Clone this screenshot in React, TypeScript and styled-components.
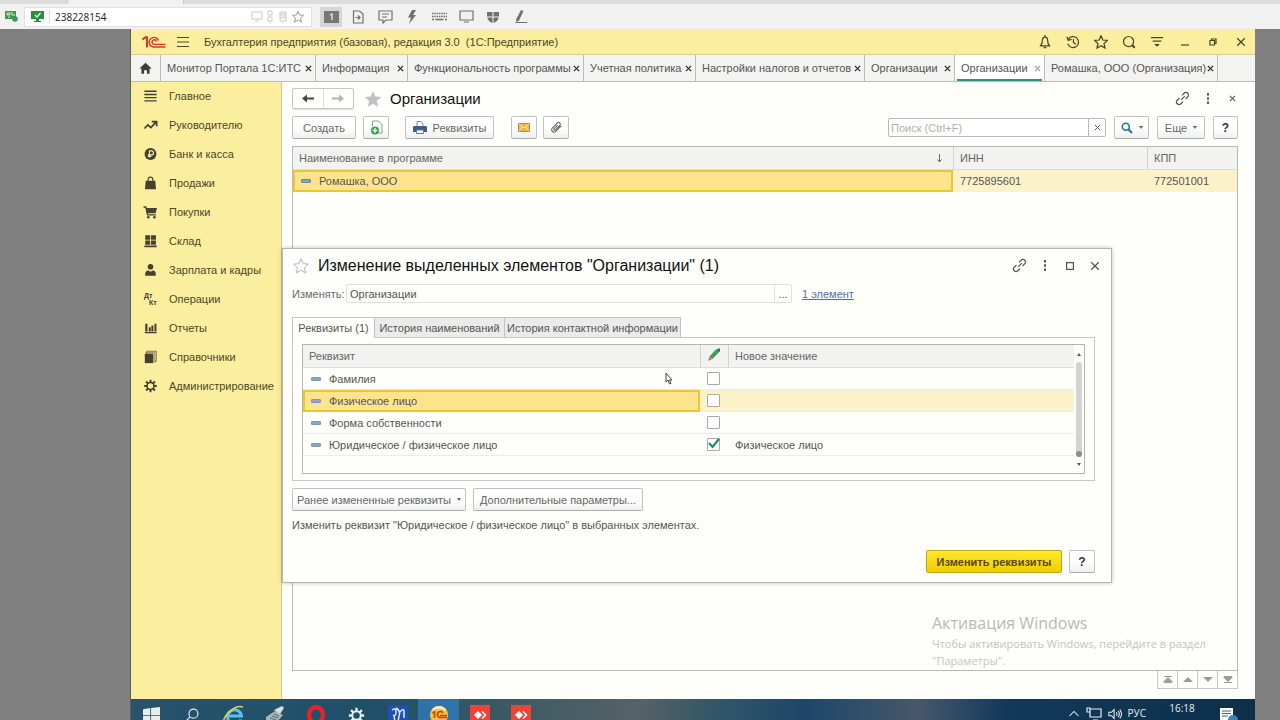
import React from "react";
import styled, { createGlobalStyle, css } from "styled-components";

const ui = '"Liberation Sans", Arial, sans-serif';
const humanist = '"Open Sans", "Noto Sans", sans-serif';
const paper = "#fefffb";
const yellow = "#fcee9f";
const ink = "#555";

const GlobalStyle = createGlobalStyle`
  * { box-sizing: border-box; }
  body { margin: 0; font: 11px/14px ${ui}; color: ${ink}; background: #808080; }
  button, input { font: inherit; color: inherit; }
  button { cursor: pointer; }
`;

/* ---------- Remote viewer chrome ---------- */

const Page = styled.div`
  display: flex;
  flex-direction: column;
  min-height: 100vh;
  overflow: hidden;
  white-space: nowrap;
`;

const ViewerTabs = styled.div`
  display: flex;
  height: 4px;
  background: #dcdcdc;
`;

const ViewerTab = styled.div`
  width: 117px;
  margin-left: 67px;
  background: #f1f1f1;
  border: solid #c8c8c8;
  border-width: 0 1px;
`;

const ViewerBar = styled.header`
  display: flex;
  align-items: center;
  gap: 6px;
  height: 25px;
  padding: 0 5px;
  background: #f1f1f1;
`;

const AddressBox = styled.div`
  display: flex;
  align-items: center;
  width: 288px;
  height: 20px;
  padding: 0 6px;
  gap: 5px;
  background: #fff;
  border: 1px solid #e2e2e2;
`;

const AddressInput = styled.input`
  flex: 1;
  min-width: 0;
  border: 0;
  border-left: 1px solid #ddd;
  padding: 0 0 0 5px;
  outline: 0;
  background: none;
  color: #1c1c1c;
  font: 10px/14px ${humanist};
`;

const ViewerTools = styled.div`
  display: flex;
  align-items: center;
  gap: 5px;
  padding-left: 2px;
`;

const ViewerTool = styled.button<{ $active?: boolean }>`
  display: grid;
  place-items: center;
  width: 22px;
  height: 20px;
  padding: 0;
  border: 0;
  color: #707070;
  background: ${(p) => (p.$active ? "#d6d6d6" : "none")};
`;

const Desktop = styled.main`
  flex: 1;
  display: flex;
  flex-direction: column;
  position: relative;
  margin: 0 25px 0 130px;
  border-left: 1px solid #5c5c5c;
  background: ${paper};
`;

/* ---------- Application window ---------- */

const TitleBar = styled.div`
  display: flex;
  align-items: center;
  height: 26px;
  padding-left: 10px;
  background: ${yellow};
  border-bottom: 1px solid #d9cf95;
  color: #4d4628;
`;

const PlainButton = styled.button`
  display: grid;
  place-items: center;
  padding: 0;
  border: 0;
  background: none;
  color: inherit;
`;

const AppTitle = styled.h1`
  flex: 1;
  margin: 0 0 0 5px;
  font-size: 11px;
  font-weight: 400;
`;

const TitleTools = styled.div`
  display: grid;
  grid-auto-flow: column;
  grid-auto-columns: 28px;
  justify-items: center;
  color: #4a4427;
`;

const TabStrip = styled.nav`
  display: flex;
  height: 27px;
  background: #f3f3f1;
  border-bottom: 1px solid #bdbdb8;
`;

const HomeTab = styled.button`
  display: grid;
  place-items: center;
  width: 30px;
  padding: 0;
  border: 0;
  border-right: 1px solid #bdbdb8;
  background: none;
  color: #3c3c3c;
`;

const Tab = styled.div<{ $width: number; $active?: boolean }>`
  display: flex;
  align-items: center;
  justify-content: space-between;
  flex: none;
  width: ${(p) => p.$width}px;
  padding: 0 3px 0 6px;
  border-right: 1px solid #bdbdb8;
  ${(p) =>
    p.$active &&
    css`
      background: linear-gradient(#2d9474, #2d9474) 2px 100% / calc(100% - 4px) 2px no-repeat #fff;
    `}
`;

const TabName = styled.button`
  padding: 0;
  border: 0;
  background: none;
`;

const TabClose = styled(PlainButton)<{ $muted?: boolean }>`
  color: ${(p) => (p.$muted ? "#a5a5a5" : "#333")};
`;

const Body = styled.div`
  flex: 1;
  display: flex;
`;

const Sidebar = styled.nav`
  flex: 0 0 151px;
  background: ${yellow};
  border-right: 1px solid #d5c98a;
`;

const SideList = styled.div`
  margin-top: -1px;
`;

const SideLink = styled.a`
  display: flex;
  align-items: center;
  gap: 10px;
  height: 29px;
  padding-left: 11px;
  color: #4d4628;
  text-decoration: none;
  svg { width: 17px; flex: none; color: #45412f; }
`;

const Workspace = styled.section`
  position: relative;
  flex: 1;
  min-width: 0;
  display: flex;
  flex-direction: column;
  padding: 6px 17px 10px 10px;
`;

const HeadRow = styled.div`
  display: flex;
  align-items: center;
  height: 21px;
`;

const NavPair = styled.div`
  display: flex;
  width: 62px;
  height: 21px;
  border: 1px solid #c6c6c2;
  border-radius: 2px;
  box-shadow: 0 1px 1px #ddd;
  margin-right: 10px;
`;

const NavButton = styled(PlainButton)`
  flex: 1;
  & + & { border-left: 1px solid #ddd; }
`;

const Heading = styled.h2<{ $size: number }>`
  flex: 1;
  margin: 0 0 0 8px;
  font-size: ${(p) => p.$size}px;
  line-height: 20px;
  font-weight: 400;
  color: #111;
`;

const HeadTools = styled.div<{ $outset: number }>`
  display: grid;
  grid-auto-flow: column;
  grid-auto-columns: 25px;
  justify-items: center;
  align-items: center;
  margin-right: -${(p) => p.$outset}px;
`;

const Toolbar = styled.div`
  display: flex;
  align-items: center;
  margin: 7px 0;
`;

const Push = styled.div`
  flex: 1;
`;

const Button = styled.button<{ $width: number; $gap?: number; $primary?: boolean }>`
  display: flex;
  align-items: center;
  justify-content: center;
  gap: 6px;
  flex: none;
  width: ${(p) => p.$width}px;
  height: 23px;
  padding: 0;
  margin-right: ${(p) => p.$gap ?? 0}px;
  border: 1px solid #c2c2be;
  border-bottom-color: #acaca8;
  border-radius: 2px;
  background: linear-gradient(#fff 50%, #efefed);
  color: #666;
  ${(p) =>
    p.$primary &&
    css`
      border-color: #c0a51a;
      background: linear-gradient(#ffe82b, #f1cd00);
      color: #584800;
      font-weight: 700;
    `}
`;

const HelpMark = styled.span`
  font-size: 12px;
  font-weight: 700;
  color: #333;
`;

const SearchBox = styled.div`
  display: flex;
  width: 218px;
  height: 19px;
  margin-right: 8px;
  border: 1px solid #b9b9b5;
  border-radius: 2px;
  background: #fff;
  input {
    flex: 1;
    min-width: 0;
    padding: 0 2px;
    border: 0;
    outline: 0;
    background: none;
  }
  input::placeholder { color: #b0b0b0; opacity: 1; }
  button { width: 17px; border-left: 1px solid #b9b9b5; }
`;

const ListFrame = styled.div`
  flex: 1;
  border: 1px solid #b9b9b5;
`;

const Grid = styled.table`
  width: 100%;
  align-self: flex-start;
  table-layout: fixed;
  border-collapse: separate;
  border-spacing: 0;
  th, td {
    padding: 0 6px;
    height: 22px;
    text-align: left;
    font-weight: 400;
    color: ${ink};
  }
  td + td { padding-left: 7px; }
  th {
    height: 23px;
    background: #f2f2f0;
    border-bottom: 1px solid #dcdcd8;
    color: #666;
  }
  th + th { border-left: 1px solid #d2d2ce; }
`;

const Row = styled.tr<{ $selected?: boolean; $ruled?: boolean }>`
  td { ${(p) => p.$ruled && "border-bottom: 1px solid #ececea;"} }
  ${(p) =>
    p.$selected &&
    css`
      td { background: #fbf2c9; }
      td:first-child { background: #ffe48d; border: 2px solid #e9c72f; }
    `}
`;

const CellLine = styled.span<{ $indent?: number }>`
  display: flex;
  align-items: center;
  gap: 8px;
  padding-left: ${(p) => p.$indent ?? 0}px;
`;

const HeaderLine = styled.span`
  display: flex;
  justify-content: space-between;
  align-items: center;
  padding-right: 4px;
`;

const Dash = styled.i<{ $blue?: boolean }>`
  width: 10px;
  height: 4px;
  border-radius: 1px;
  border: 1px solid ${(p) => (p.$blue ? "#8397b4" : "#74858b")};
  background: ${(p) => (p.$blue ? "#8fa5c4" : "#7fa7b5")};
`;

const Pager = styled.div`
  display: flex;
  align-self: flex-end;
  border-right: 1px solid #c6c6c2;
  button {
    width: 20px;
    height: 18px;
    border: solid #c6c6c2;
    border-width: 0 0 1px 1px;
    color: #9c9c9c;
  }
`;

/* ---------- Dialog ---------- */

const Dialog = styled.section`
  position: absolute;
  top: 166px;
  left: 0;
  right: 143px;
  padding: 6px 16px 9px 9px;
  border: 1px solid #b5b5b0;
  background: ${paper};
  box-shadow: 0 0 4px rgba(0, 0, 0, 0.25);
`;

const FieldRow = styled.div`
  display: flex;
  align-items: center;
  margin: 8px 0 14px;
  > label { width: 54px; color: #6a6a6a; }
  a { margin-left: 10px; color: #4d73a0; }
`;

const Field = styled.div`
  display: flex;
  width: 446px;
  height: 19px;
  border: 1px solid #e0e0dc;
  border-radius: 2px;
  input { flex: 1; min-width: 0; border: 0; padding: 0 3px; outline: 0; background: none; }
  button { width: 17px; border-left: 1px solid #e0e0dc; }
`;

const DialogTabs = styled.div`
  display: flex;
  height: 20px;
`;

const DialogTab = styled.button<{ $width: number; $active?: boolean }>`
  width: ${(p) => p.$width}px;
  padding: 0;
  border: 1px solid #c2c2be;
  border-bottom: 0;
  background: ${(p) => (p.$active ? paper : "#ebebe9")};
  margin-bottom: ${(p) => (p.$active ? -1 : 0)}px;
  & + & { border-left: 0; }
`;

const Panel = styled.div`
  padding: 6px 9px;
  border: 1px solid #c9c9c5;
`;

const TableFrame = styled.div`
  display: flex;
  height: 130px;
  border: 1px solid #b5b5b0;
`;

const ScrollBar = styled.div`
  flex: 0 0 10px;
  display: flex;
  flex-direction: column;
  align-items: center;
  padding: 8px 0 7px;
  gap: 6px;
`;

const ScrollThumb = styled.div`
  flex: 1;
  display: flex;
  align-items: flex-end;
  width: 6px;
  border-radius: 3px;
  background: #d3d3d1;
  &::after {
    content: "";
    width: 6px;
    height: 6px;
    border-radius: 50%;
    background: #8f8f8d;
  }
`;

const CheckBox = styled.label`
  display: grid;
  width: 13px;
  input, svg { grid-area: 1 / 1; }
  input {
    appearance: none;
    width: 13px;
    height: 13px;
    margin: 0;
    border: 1px solid #a9a9a5;
    border-radius: 1px;
    background: #fff;
  }
  svg { display: none; pointer-events: none; z-index: 1; }
  input:checked + svg { display: block; }
`;

const DialogActions = styled.div<{ $end?: boolean }>`
  display: flex;
  justify-content: ${(p) => (p.$end ? "flex-end" : "flex-start")};
  margin-top: 7px;
`;

const Hint = styled.p`
  margin: 7px 0 18px;
`;

const Pointer = styled.svg`
  position: absolute;
  left: 382px;
  top: 123px;
`;

const Watermark = styled.aside`
  position: absolute;
  right: 33px;
  bottom: 51px;
  width: 290px;
  font: 11px/17px ${humanist};
  color: #c3c3c1;
  pointer-events: none;
  p { margin: 0; }
  p:first-child { font-size: 16px; line-height: 23px; color: #b9b9b7; }
`;

/* ---------- Taskbar ---------- */

const Taskbar = styled.footer`
  display: flex;
  align-items: flex-start;
  height: 21px;
  overflow: hidden;
  background: linear-gradient(90deg, #27536b, #1f5069 22%, #3d5a64 34%, #566266 45%, #335668 52%, #1c4668 60%, #47586a 70%, #12385a 78%, #0d3049);
  color: #e8edf0;
`;

const TaskButton = styled(PlainButton)<{ $active?: boolean }>`
  flex: none;
  width: 41px;
  height: 32px;
  background: ${(p) => (p.$active ? "#2f74a8" : "none")};
`;

const Tray = styled.div`
  display: flex;
  align-items: flex-start;
  gap: 6px;
  margin-left: auto;
  padding: 8px 17px 0 0;
  font: 10px/12px ${humanist};
`;

const Clock = styled.time`
  display: block;
  width: 60px;
  margin-top: -5px;
  text-align: center;
`;

/* ---------- Icons ---------- */

type IconProps = { w?: number; h?: number; box?: string; children: React.ReactNode; sw?: number };

const Line = ({ w = 14, h = w, box = "0 0 16 16", sw = 1.4, children }: IconProps) => (
  <svg width={w} height={h} viewBox={box} fill="none" stroke="currentColor" strokeWidth={sw} aria-hidden>
    {children}
  </svg>
);

const Solid = ({ w = 14, h = w, box = "0 0 16 16", children }: IconProps) => (
  <svg width={w} height={h} viewBox={box} fill="currentColor" aria-hidden>
    {children}
  </svg>
);

const Cross = ({ size = 7, sw = 1.6 }: { size?: number; sw?: number }) => (
  <Line w={size} box="0 0 8 8" sw={sw}><path d="M1 1l6 6M7 1L1 7" /></Line>
);

const starPath = "M8 .8l2.100 4.900 5.300.5-4 3.500 1.200 5.200L8 12.200l-4.600 2.700 1.200-5.200-4-3.500 5.300-.5z";

const LinkIcon = () => (
  <Line w={15} sw={1.3}>
    <path d="M6.500 9.500l4-4M7.500 4.600l2.200-2.200a2.600 2.600 0 0 1 3.900 3.800l-2.400 2.300M8.500 11.400l-2.200 2.200a2.600 2.600 0 0 1-3.900-3.800l2.400-2.300" />
  </Line>
);

const DotsIcon = () => (
  <Solid w={4} h={11} box="0 0 4 11"><path d="M1 0h2v2.500H1zM1 4.200h2v2.500H1zM1 8.500h2V11H1z" /></Solid>
);

const Caret = ({ up }: { up?: boolean }) => (
  <Solid w={4} h={3} box="0 0 4 3"><path d={up ? "M0 3h4L2 0z" : "M0 0h4L2 3z"} /></Solid>
);

const Arrow = ({ back, color }: { back?: boolean; color: string }) => (
  <svg width="12" height="9" viewBox="0 0 12 9" fill={color} aria-hidden>
    <path d={back ? "M0 4.500L5 .5v2.900h7v2.200H5v2.900z" : "M12 4.500L7 .5v2.900H0v2.200h7v2.900z"} />
  </svg>
);

const Logo1C = () => (
  <svg width="26" height="14" viewBox="0 0 26 14" fill="none" stroke="#d8322a" role="img" aria-label="1C">
    <path d="M1.500 4.600L4.500 2.300H6V12.500" strokeWidth="2" />
    <path d="M17.500 5.500A4.800 4.800 0 1 0 13.500 12H24.500" strokeWidth="1.500" />
    <path d="M15.500 6.500A2.300 2.300 0 1 0 13.500 9.400H24.500" strokeWidth="1.300" />
  </svg>
);

const Gear = ({ size = 14 }: { size?: number }) => (
  <Line w={size} sw={1.8}>
    <circle cx="8" cy="8" r="4" />
    <path d="M8 4V.8M8 15.200V12M4 8H.8M15.200 8H12M5.200 5.200L2.900 2.900M13.100 13.100l-2.300-2.300M5.200 10.800l-2.300 2.300M13.100 2.900l-2.300 2.300" strokeWidth="2.200" />
  </Line>
);

const viewerTools: { name: string; icon: React.ReactNode }[] = [
  { name: "Монитор 1", icon: (
    <svg width="15" height="12" viewBox="0 0 15 12" aria-hidden><path fill="#777" d="M0 0h15v12H0z" /><path fill="none" stroke="#eee" strokeWidth="1.300" d="M6 4l2-1v6" /></svg>
  ) },
  { name: "Передача файлов", icon: <Line w={13} h={14} box="0 0 13 14" sw={1.2}><path d="M1.500 1h6l3.500 3v9H1.500zM3.500 7.500H8M6 5.500l2 2-2 2" /></Line> },
  { name: "Чат", icon: <Line w={15} h={14} box="0 0 15 14" sw={1.2}><path d="M1 1h13v9H8l-3 3v-3H1zM4 4h7M4 7h5" /></Line> },
  { name: "Действия", icon: <Solid w={10} h={14} box="0 0 10 14"><path d="M5 0h4L6 5h3L2 14l2-6.500H1z" /></Solid> },
  { name: "Клавиатура", icon: <Line w={15} h={9} box="0 0 15 9" sw={1.5}><path d="M0 1.500h15M0 4.500h15" strokeDasharray="1.500 .8" /><path d="M0 7.500h2M3.500 7.500h8M13 7.500h2" /></Line> },
  { name: "Экран", icon: <Line w={15} h={13} box="0 0 15 13" sw={1.2}><path d="M1 1h13v9H1zM5 12h5" /></Line> },
  { name: "Права", icon: <Solid w={12} h={12} box="0 0 12 12"><path d="M0 1h5.500v4.500H0zM6.500 1H12v4.500H6.500zM.3 6.500h5.200V12C2.500 11 .8 9 .3 6.500zM6.500 6.500h5.200C11.200 9 9.500 11 6.500 12z" /></Solid> },
  { name: "Рисование", icon: <Solid w={13} h={13} box="0 0 13 13"><path d="M7 0l2.500 1L5 10.500 2 12l.3-3zM2 12h11v1H1z" /></Solid> },
];

const tabs = [
  { name: "Монитор Портала 1С:ИТС", width: 155 },
  { name: "Информация", width: 92 },
  { name: "Функциональность программы", width: 176 },
  { name: "Учетная политика", width: 112 },
  { name: "Настройки налогов и отчетов", width: 169 },
  { name: "Организации", width: 90 },
  { name: "Организации", width: 90, active: true },
  { name: "Ромашка, ООО (Организация)", width: 173 },
];

const sections: { name: string; icon: React.ReactNode }[] = [
  { name: "Главное", icon: <Line h={14} sw={1.6}><path d="M1 2.500h14M1 6.200h14M1 9.900h14M1 13.600h14" /></Line> },
  { name: "Руководителю", icon: <Line h={14} sw={2}><path d="M1 12l4-4 3.500 3L14 5M9.500 4H15v5.500" /></Line> },
  { name: "Банк и касса", icon: <Solid h={14}><circle cx="8" cy="8" r="6.800" /><path d="M6.800 12V4.500h2.400a2.200 2.200 0 0 1 0 4.500H5M5 10.700h4" fill="none" stroke={yellow} strokeWidth="1.300" /></Solid> },
  { name: "Продажи", icon: <Solid h={14}><path d="M2.500 5.500h11l.8 9.500H1.700z" /><path d="M5.300 7V4a2.700 2.700 0 0 1 5.400 0v3" fill="none" stroke="currentColor" strokeWidth="1.300" /></Solid> },
  { name: "Покупки", icon: <Solid h={14}><path d="M0 1.500h3l.7 2H15.500l-1.800 6H5l.3 1.200h8.900V12H4L2 3H0z" /><circle cx="5.500" cy="14" r="1.500" /><circle cx="12.500" cy="14" r="1.500" /></Solid> },
  { name: "Склад", icon: <Solid h={14}><path d="M2 1.500h5.600v5H2zM8.600 1.500h5.600v5H8.600zM2 7.500h5.600v4.700H2zM8.600 7.500h5.600v4.700H8.600zM1 13.200h14.200V15H1z" /></Solid> },
  { name: "Зарплата и кадры", icon: <Solid h={14}><circle cx="8" cy="4.300" r="3.200" /><path d="M2 14.500v-2.500q0-3 3.500-3.500L8 10l2.500-1.500Q14 9 14 12v2.500z" /></Solid> },
  { name: "Операции", icon: (
    <svg width="17" height="16" viewBox="0 0 17 16" fill="currentColor" fontFamily="Liberation Sans" fontWeight="700" fontSize="7" aria-hidden><text x="2" y="7">Дт</text><text x="7" y="14">Кт</text></svg>
  ) },
  { name: "Отчеты", icon: <Solid h={14}><path d="M2 3h2.500v9H2zM6 7h2.300v5H6zM9 5h2.300v7H9zM12.500 3h2.300v9h-2.300zM1.500 12.500H15V14H1.500z" /></Solid> },
  { name: "Справочники", icon: <Solid h={14}><path d="M1.500 4h9.800v11H1.500z" /><path d="M3 3.500L4 1.500h10.500v11l-2 1.500" fill="none" stroke="currentColor" strokeWidth="1.200" opacity=".7" /><path d="M3.500 2.800h9.300v10" fill="none" stroke="currentColor" opacity=".6" /></Solid> },
  { name: "Администрирование", icon: <Gear /> },
];

const attributes = [
  { name: "Фамилия", checked: false, value: "" },
  { name: "Физическое лицо", checked: false, value: "", selected: true },
  { name: "Форма собственности", checked: false, value: "" },
  { name: "Юридическое / физическое лицо", checked: true, value: "Физическое лицо" },
];

const AnyDesk = () => (
  <svg width="20" height="20" viewBox="0 0 20 20" aria-hidden><path fill="#ee4438" d="M0 0h20v20H0z" /><path fill="#fff" d="M4 10l4-4 4 4-4 4z" /><path fill="none" stroke="#fff" strokeWidth="1.500" d="M12 6.500l3.500 3.500-3.500 3.500" /></svg>
);

const tasks: { name: string; icon: React.ReactNode; active?: boolean }[] = [
  { name: "Пуск", icon: <Solid w={17} h={17}><path d="M0 2l6.800-1v6.500H0zM7.600.9L16 0v7.500H7.600zM0 8.300h6.800V15L0 14zM7.600 8.300H16V16l-8.400-1z" /></Solid> },
  { name: "Поиск", icon: <Line w={15} sw={1.2}><circle cx="9" cy="6" r="4.800" /><path d="M5.500 9.500L1 14" /></Line> },
  { name: "Браузер", icon: (
    <svg width="22" height="20" viewBox="0 0 22 20" fill="none" aria-hidden><path d="M18 14.500A7 7 0 1 1 18.500 11H5.500" stroke="#55c3ee" strokeWidth="3" /><path d="M1 18C-1 12 12-1 20 2" stroke="#f1cf45" strokeWidth="1.500" /></svg>
  ) },
  { name: "Утилита", icon: (
    <svg width="20" height="20" viewBox="0 0 20 20" aria-hidden><path fill="#a9b4b9" d="M1 12l9-6 8 4-7 8-10-2z" /><path fill="#d7dde0" d="M9 5l8-4 2 2-4 6z" /><path stroke="#5d6a71" d="M5 13l6 2M7 11l6 2M9 9l5 2" /></svg>
  ) },
  { name: "Opera", icon: (
    <svg width="20" height="20" viewBox="0 0 20 20" aria-hidden><ellipse cx="10" cy="10" rx="7" ry="8" fill="none" stroke="#e4222c" strokeWidth="4.500" /></svg>
  ) },
  { name: "Параметры", icon: <Gear size={17} /> },
  { name: "Конфигуратор", icon: (
    <svg width="20" height="20" viewBox="0 0 20 20" aria-hidden><path fill="#1d4fb4" d="M0 0h20v20H0z" /><path fill="none" stroke="#e3ebf8" strokeWidth="1.500" d="M4 5q4-3 4 2t-3 3M8 3q5 3 3 8M12 7q4-5 4 0v6M6 10l1 8M11 11l-1 6" /></svg>
  ) },
  { name: "1С:Предприятие", active: true, icon: (
    <svg width="20" height="20" viewBox="0 0 20 20" aria-hidden><circle cx="10" cy="10" r="9" fill="#f7c33c" /><path fill="#f9e9b5" d="M2 6a9 9 0 0 1 16 0q-8-4-16 0z" /><path fill="none" stroke="#d5371f" strokeWidth="1.700" d="M3.500 8l2-1v6M14 8a3 3 0 1 0-2 4.500h6M11 10.500h7" /></svg>
  ) },
  { name: "AnyDesk", icon: <AnyDesk /> },
  { name: "AnyDesk 2", icon: <AnyDesk /> },
];

const pagerButtons = [
  { name: "В начало", d: "M1 0h8v1H1zM5 1l5 5H0zM1 6h8v1H1z" },
  { name: "Выше", d: "M5 1l5 5H0z" },
  { name: "Ниже", d: "M0 1h10L5 6z" },
  { name: "В конец", d: "M1 0h8v1H1zM0 1h10L5 6zM1 6h8v1H1z" },
];

/* ---------- Views ---------- */

const Viewer = () => (
  <>
    <ViewerTabs><ViewerTab /></ViewerTabs>
    <ViewerBar>
      <svg width="13" height="11" viewBox="0 0 13 11" aria-hidden><path fill="#3d9a4c" d="M0 0h11v8H0z" /><path stroke="#d9efdc" fill="none" d="M2 2h3v2H2zM7 1v3h3M3 7l2-2" /><circle cx="10" cy="8" r="2.800" fill="#4a8f55" /></svg>
      <AddressBox>
        <svg width="13" height="11" viewBox="0 0 13 11" aria-hidden><path fill="#24913c" d="M0 0h13v8H8v2h2v1H3v-1h2V8H0z" /><path fill="none" stroke="#fff" strokeWidth="1.200" d="M4 4l2 2 3.500-4" /></svg>
        <AddressInput aria-label="Адрес" defaultValue="238228154" />
        <svg width="54" height="14" viewBox="0 0 54 14" fill="none" stroke="#c9c9cc" aria-hidden>
          <path d="M1 2h10v7H1zM4 11h4M17 1h4v4h-4zM17 7h4v4h-4zM18.500 13h1" />
          <path d="M29 2h6v9h-6zM29 4h6M29 6h6M29 8h6M31.500 13h1" />
          <path stroke="#999" d="M47 1.500l1.500 3.500 4 .3-3 2.700 1 4-3.500-2.200-3.500 2.200 1-4-3-2.700 4-.3z" />
        </svg>
      </AddressBox>
      <ViewerTools>
        {viewerTools.map((t, i) => (
          <ViewerTool key={t.name} title={t.name} $active={i === 0}>{t.icon}</ViewerTool>
        ))}
      </ViewerTools>
    </ViewerBar>
  </>
);

const AppHeader = () => (
  <>
    <TitleBar>
      <Logo1C />
      <PlainButton aria-label="Меню">
        <Line w={32} h={12} box="-4 0 32 12" sw={1.2}><path d="M6 1.500h12M6 6h12M6 10.500h12" /></Line>
      </PlainButton>
      <AppTitle>Бухгалтерия предприятия (базовая), редакция 3.0&nbsp; (1С:Предприятие)</AppTitle>
      <TitleTools>
        <PlainButton aria-label="Уведомления"><Line><path d="M2 12.500h12M3 12q2-2 2-6a3 3.500 0 0 1 6 0q0 4 2 6M6.500 14.500h3M8 0v2" /></Line></PlainButton>
        <PlainButton aria-label="История"><Line><path d="M2.500 5a6.300 6.300 0 1 1-.5 5M1 2l1.500 4 4-1M8.500 4.500v4l2.500 2" /></Line></PlainButton>
        <PlainButton aria-label="Избранное"><Line><path d={starPath} /></Line></PlainButton>
        <PlainButton aria-label="Поиск"><Line><circle cx="7.500" cy="7.500" r="5.800" /><path d="M11.500 11.500l3 3" strokeWidth="2.400" /></Line></PlainButton>
        <PlainButton aria-label="Настройка панели"><Line><path d="M1 3h14M3 7h10M6.500 11l1.500 1.500L9.500 11z" /></Line></PlainButton>
        <PlainButton aria-label="Свернуть"><Line w={8} box="0 0 8 8" sw={1.2}><path d="M0 7h8" /></Line></PlainButton>
        <PlainButton aria-label="Восстановить"><Line w={8} box="0 0 8 8" sw={1.2}><path d="M1 2.500h4.500v4.500H1zM2.500 2V1H7v4.500H6" /></Line></PlainButton>
        <PlainButton aria-label="Закрыть"><Cross size={10} sw={1} /></PlainButton>
      </TitleTools>
    </TitleBar>
    <TabStrip>
      <HomeTab aria-label="Начальная страница"><Solid w={13}><path d="M8 1l7.500 7H13v6.500H9.800V10H6.200v4.500H3V8H.5z" /></Solid></HomeTab>
      {tabs.map((t, i) => (
        <Tab key={i} $width={t.width} $active={t.active}>
          <TabName>{t.name}</TabName>
          <TabClose aria-label="Закрыть вкладку" $muted={t.active}><Cross /></TabClose>
        </Tab>
      ))}
    </TabStrip>
  </>
);

const EditDialog = () => (
  <Dialog role="dialog" aria-labelledby="dialog-title">
    <HeadRow>
      <PlainButton aria-label="В избранное"><svg width="18" height="16" viewBox="0 0 16 16" fill="none" stroke="#b5b5b5" aria-hidden><path d={starPath} /></svg></PlainButton>
      <Heading id="dialog-title" $size={16}>Изменение выделенных элементов "Организации" (1)</Heading>
      <HeadTools $outset={12}>
        <PlainButton aria-label="Ссылка"><LinkIcon /></PlainButton>
        <PlainButton aria-label="Еще"><DotsIcon /></PlainButton>
        <PlainButton aria-label="Развернуть"><Line w={8} box="0 0 8 8" sw={1.2}><path d="M.6.6h6.800v6.800H.6z" /></Line></PlainButton>
        <PlainButton aria-label="Закрыть"><Cross size={10} sw={1} /></PlainButton>
      </HeadTools>
    </HeadRow>
    <FieldRow>
      <label htmlFor="target">Изменять:</label>
      <Field>
        <input id="target" defaultValue="Организации" />
        <PlainButton aria-label="Выбрать">...</PlainButton>
      </Field>
      <a href="#elements">1 элемент</a>
    </FieldRow>
    <DialogTabs role="tablist">
      <DialogTab role="tab" $width={83} $active>Реквизиты (1)</DialogTab>
      <DialogTab role="tab" $width={130}>История наименований</DialogTab>
      <DialogTab role="tab" $width={176}>История контактной информации</DialogTab>
    </DialogTabs>
    <Panel>
      <TableFrame>
        <Grid>
          <colgroup><col /><col width="28" /><col width="346" /></colgroup>
          <thead>
            <tr>
              <th>Реквизит</th>
              <th aria-label="Изменить">
                <svg width="14" height="14" viewBox="0 0 14 14" aria-hidden><path fill="#3f9a54" d="M8.500 2l3-1.500L13 3 5.500 11 2.500 8.500z" /><path fill="#2f6f45" d="M10 1l3-.5V4z" /><path fill="#b08a50" d="M2.500 8.500l3 2.500L1 13z" /></svg>
              </th>
              <th>Новое значение</th>
            </tr>
          </thead>
          <tbody>
            {attributes.map((a) => (
              <Row key={a.name} $selected={a.selected} $ruled>
                <td><CellLine $indent={a.selected ? 0 : 2}><Dash $blue />{a.name}</CellLine></td>
                <td>
                  <CheckBox>
                    <input type="checkbox" defaultChecked={a.checked} aria-label={a.name} />
                    <svg width="13" height="13" viewBox="0 0 13 13" fill="none" stroke="#178a5c" strokeWidth="2" aria-hidden><path d="M2 5l3.500 4L12 1" /></svg>
                  </CheckBox>
                </td>
                <td>{a.value}</td>
              </Row>
            ))}
          </tbody>
        </Grid>
        <ScrollBar><Caret up /><ScrollThumb /><Caret /></ScrollBar>
      </TableFrame>
    </Panel>
    <DialogActions>
      <Button $width={174} $gap={7}>Ранее измененные реквизиты <Caret /></Button>
      <Button $width={170}>Дополнительные параметры...</Button>
    </DialogActions>
    <Hint>Изменить реквизит "Юридическое / физическое лицо" в выбранных элементах.</Hint>
    <DialogActions $end>
      <Button $width={136} $gap={7} $primary>Изменить реквизиты</Button>
      <Button $width={26} aria-label="Справка"><HelpMark>?</HelpMark></Button>
    </DialogActions>
    <Pointer width="8" height="13" viewBox="0 0 8 13" fill="#fff" stroke="#444" aria-hidden><path d="M1 1v9l2-2 1.500 4 1.500-.7L4.500 8H7z" /></Pointer>
  </Dialog>
);

const Organizations = () => (
  <Workspace>
    <HeadRow>
      <NavPair>
        <NavButton aria-label="Назад"><Arrow back color="#444" /></NavButton>
        <NavButton aria-label="Вперед"><Arrow color="#b4b4b4" /></NavButton>
      </NavPair>
      <PlainButton aria-label="В избранное"><svg width="18" height="18" viewBox="0 0 16 16" fill="#c2c2c4" aria-hidden><path d={starPath} /></svg></PlainButton>
      <Heading $size={15}>Организации</Heading>
      <HeadTools $outset={7}>
        <PlainButton aria-label="Ссылка"><LinkIcon /></PlainButton>
        <PlainButton aria-label="Еще"><DotsIcon /></PlainButton>
        <PlainButton aria-label="Закрыть"><Cross size={7} sw={1.2} /></PlainButton>
      </HeadTools>
    </HeadRow>
    <Toolbar>
      <Button $width={64} $gap={7}>Создать</Button>
      <Button $width={26} $gap={16} aria-label="Создать копированием">
        <svg width="13" height="15" viewBox="0 0 13 15" fill="none" aria-hidden><path stroke="#8b9b93" d="M2.500 6V1h6L12 4.500V13H8" /><circle cx="5" cy="10.500" r="4" fill="#35a04e" /><path stroke="#fff" strokeWidth="1.400" d="M5 8.200v4.600M2.700 10.500h4.600" /></svg>
      </Button>
      <Button $width={89} $gap={17}>
        <svg width="14" height="13" viewBox="0 0 14 13" aria-hidden><path fill="#fff" stroke="#7b8ca0" d="M4 6V.5h4L10 3v3" /><path fill="#3c5f8c" d="M1 5h12l1 1v5H0V6z" /><path fill="#fff" stroke="#5e7a9c" d="M3.500 9h7v3.500h-7z" /></svg>
        Реквизиты
      </Button>
      <Button $width={26} $gap={6} aria-label="Письмо">
        <svg width="12" height="9" viewBox="0 0 12 9" aria-hidden><path fill="#f1b244" stroke="#c98a22" d="M.5.5h11v8H.5z" /><path fill="none" stroke="#fff0cc" d="M1 1l5 4 5-4M1 8l3.500-4M11 8L7.500 4" /></svg>
      </Button>
      <Button $width={26} aria-label="Файлы">
        <Line w={13} sw={1.3}><path d="M12.500 7l-5.500 6a3 3 0 0 1-4.400-4l6.200-6.500a2.200 2.200 0 0 1 3.300 3L6.500 11.200a1 1 0 0 1-1.600-1.400L9.500 5M14 6l-2 2" /></Line>
      </Button>
      <Push />
      <SearchBox>
        <input placeholder="Поиск (Ctrl+F)" aria-label="Поиск" />
        <PlainButton aria-label="Очистить"><Cross size={7} sw={1.1} /></PlainButton>
      </SearchBox>
      <Button $width={35} $gap={8} aria-label="Найти">
        <svg width="12" height="12" viewBox="0 0 12 12" fill="none" stroke="#2f6da8" aria-hidden><circle cx="4.800" cy="4.800" r="3.500" strokeWidth="1.600" /><path d="M7.500 7.500L11 11" strokeWidth="2.200" /></svg>
        <Caret />
      </Button>
      <Button $width={48} $gap={8}>Еще <Caret /></Button>
      <Button $width={25} aria-label="Справка"><HelpMark>?</HelpMark></Button>
    </Toolbar>
    <ListFrame>
      <Grid>
        <colgroup><col /><col width="194" /><col width="90" /></colgroup>
        <thead>
          <tr>
            <th><HeaderLine>Наименование в программе <Line w={7} h={9} box="0 0 7 9" sw={1}><path d="M3.500 0v8M1.500 5.500l2 2.500 2-2.500" /></Line></HeaderLine></th>
            <th>ИНН</th>
            <th>КПП</th>
          </tr>
        </thead>
        <tbody>
          <Row $selected>
            <td><CellLine><Dash />Ромашка, ООО</CellLine></td>
            <td>7725895601</td>
            <td>772501001</td>
          </Row>
        </tbody>
      </Grid>
    </ListFrame>
    <Pager>
      {pagerButtons.map((b) => (
        <PlainButton key={b.name} aria-label={b.name}><Solid w={10} h={7} box="0 0 10 7"><path d={b.d} /></Solid></PlainButton>
      ))}
    </Pager>
    <EditDialog />
  </Workspace>
);

const WindowsTaskbar = () => (
  <Taskbar>
    {tasks.map((t) => (
      <TaskButton key={t.name} title={t.name} $active={t.active}>{t.icon}</TaskButton>
    ))}
    <Tray>
      <Line w={12} sw={1.4}><path d="M2 12l6-6 6 6" /></Line>
      <Line w={16} h={14} box="0 0 16 14" sw={1.2}><path d="M4 2h11v8H4zM1 1h3v4H1zM7 13h5" /></Line>
      <Line w={14} sw={1.2}><path d="M1 6h3l3-3v10L4 10H1zM9.500 6q1.500 2 0 4M11.500 4.500q3 3.500 0 7M13.500 3q4 5 0 10" /></Line>
      <span>РУС</span>
      <Clock>16:18</Clock>
      <svg width="20" height="16" viewBox="0 0 20 16" aria-hidden><path fill="#fff" d="M2 1h13v12H2z" /><path stroke="#4a6274" d="M4 4h9M4 6.500h9M4 9h6" /><circle cx="15" cy="13" r="5" fill="#3c82bd" /></svg>
    </Tray>
  </Taskbar>
);

export default function App() {
  return (
    <Page>
      <GlobalStyle />
      <Viewer />
      <Desktop>
        <AppHeader />
        <Body>
          <Sidebar>
            <SideList>
              {sections.map((s) => (
                <SideLink key={s.name} href="#section">{s.icon}{s.name}</SideLink>
              ))}
            </SideList>
          </Sidebar>
          <Organizations />
        </Body>
        <Watermark>
          <p>Активация Windows</p>
          <p>Чтобы активировать Windows, перейдите в раздел</p>
          <p>"Параметры".</p>
        </Watermark>
        <WindowsTaskbar />
      </Desktop>
    </Page>
  );
}
